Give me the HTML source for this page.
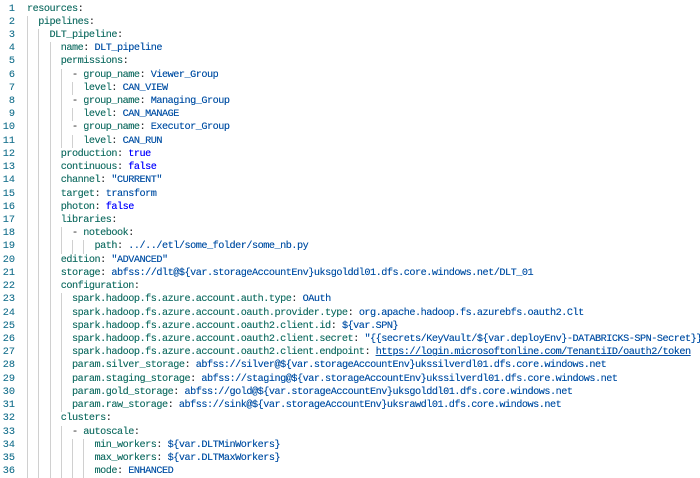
<!DOCTYPE html>
<html><head><meta charset="utf-8"><style>
html,body{margin:0;padding:0;background:#fff;width:700px;height:478px;overflow:hidden}
#c{position:absolute;left:0;top:2.5px;font-family:"Liberation Mono",monospace;font-size:10.2px;letter-spacing:-0.49px;line-height:13.23px;text-shadow:0 0 0.3px currentColor}
.l{height:13.23px;white-space:pre;position:relative}
.n{position:absolute;left:0;width:15px;text-align:right;color:#237893;letter-spacing:0}
.t{position:absolute;left:27px;top:0}
.g{display:inline-block;width:11.26px;height:13.23px;vertical-align:top;box-shadow:inset 1px 0 0 #d0d0d0}
.k{color:#177066}.v{color:#0451a5}.b{color:#0000ff}.p{color:#333}.u{text-decoration:underline}
</style></head><body><div id="c">
<div class="l"><span class="n">1</span><span class="t"><span class="k">resources</span><span class="p">:</span></span></div>
<div class="l"><span class="n">2</span><span class="t"><span class="g"></span><span class="k">pipelines</span><span class="p">:</span></span></div>
<div class="l"><span class="n">3</span><span class="t"><span class="g"></span><span class="g"></span><span class="k">DLT_pipeline</span><span class="p">:</span></span></div>
<div class="l"><span class="n">4</span><span class="t"><span class="g"></span><span class="g"></span><span class="g"></span><span class="k">name</span><span class="p">: </span><span class="v">DLT_pipeline</span></span></div>
<div class="l"><span class="n">5</span><span class="t"><span class="g"></span><span class="g"></span><span class="g"></span><span class="k">permissions</span><span class="p">:</span></span></div>
<div class="l"><span class="n">6</span><span class="t"><span class="g"></span><span class="g"></span><span class="g"></span><span class="g"></span><span class="p">- </span><span class="k">group_name</span><span class="p">: </span><span class="v">Viewer_Group</span></span></div>
<div class="l"><span class="n">7</span><span class="t"><span class="g"></span><span class="g"></span><span class="g"></span><span class="g"></span><span class="g"></span><span class="k">level</span><span class="p">: </span><span class="v">CAN_VIEW</span></span></div>
<div class="l"><span class="n">8</span><span class="t"><span class="g"></span><span class="g"></span><span class="g"></span><span class="g"></span><span class="p">- </span><span class="k">group_name</span><span class="p">: </span><span class="v">Managing_Group</span></span></div>
<div class="l"><span class="n">9</span><span class="t"><span class="g"></span><span class="g"></span><span class="g"></span><span class="g"></span><span class="g"></span><span class="k">level</span><span class="p">: </span><span class="v">CAN_MANAGE</span></span></div>
<div class="l"><span class="n">10</span><span class="t"><span class="g"></span><span class="g"></span><span class="g"></span><span class="g"></span><span class="p">- </span><span class="k">group_name</span><span class="p">: </span><span class="v">Executor_Group</span></span></div>
<div class="l"><span class="n">11</span><span class="t"><span class="g"></span><span class="g"></span><span class="g"></span><span class="g"></span><span class="g"></span><span class="k">level</span><span class="p">: </span><span class="v">CAN_RUN</span></span></div>
<div class="l"><span class="n">12</span><span class="t"><span class="g"></span><span class="g"></span><span class="g"></span><span class="k">production</span><span class="p">: </span><span class="b">true</span></span></div>
<div class="l"><span class="n">13</span><span class="t"><span class="g"></span><span class="g"></span><span class="g"></span><span class="k">continuous</span><span class="p">: </span><span class="b">false</span></span></div>
<div class="l"><span class="n">14</span><span class="t"><span class="g"></span><span class="g"></span><span class="g"></span><span class="k">channel</span><span class="p">: </span><span class="v">"CURRENT"</span></span></div>
<div class="l"><span class="n">15</span><span class="t"><span class="g"></span><span class="g"></span><span class="g"></span><span class="k">target</span><span class="p">: </span><span class="v">transform</span></span></div>
<div class="l"><span class="n">16</span><span class="t"><span class="g"></span><span class="g"></span><span class="g"></span><span class="k">photon</span><span class="p">: </span><span class="b">false</span></span></div>
<div class="l"><span class="n">17</span><span class="t"><span class="g"></span><span class="g"></span><span class="g"></span><span class="k">libraries</span><span class="p">:</span></span></div>
<div class="l"><span class="n">18</span><span class="t"><span class="g"></span><span class="g"></span><span class="g"></span><span class="g"></span><span class="p">- </span><span class="k">notebook</span><span class="p">:</span></span></div>
<div class="l"><span class="n">19</span><span class="t"><span class="g"></span><span class="g"></span><span class="g"></span><span class="g"></span><span class="g"></span><span class="g"></span><span class="k">path</span><span class="p">: </span><span class="v">../../etl/some_folder/some_nb.py</span></span></div>
<div class="l"><span class="n">20</span><span class="t"><span class="g"></span><span class="g"></span><span class="g"></span><span class="k">edition</span><span class="p">: </span><span class="v">"ADVANCED"</span></span></div>
<div class="l"><span class="n">21</span><span class="t"><span class="g"></span><span class="g"></span><span class="g"></span><span class="k">storage</span><span class="p">: </span><span class="v">abfss://dlt@${var.storageAccountEnv}uksgolddl01.dfs.core.windows.net/DLT_01</span></span></div>
<div class="l"><span class="n">22</span><span class="t"><span class="g"></span><span class="g"></span><span class="g"></span><span class="k">configuration</span><span class="p">:</span></span></div>
<div class="l"><span class="n">23</span><span class="t"><span class="g"></span><span class="g"></span><span class="g"></span><span class="g"></span><span class="k">spark.hadoop.fs.azure.account.auth.type</span><span class="p">: </span><span class="v">OAuth</span></span></div>
<div class="l"><span class="n">24</span><span class="t"><span class="g"></span><span class="g"></span><span class="g"></span><span class="g"></span><span class="k">spark.hadoop.fs.azure.account.oauth.provider.type</span><span class="p">: </span><span class="v">org.apache.hadoop.fs.azurebfs.oauth2.Clt</span></span></div>
<div class="l"><span class="n">25</span><span class="t"><span class="g"></span><span class="g"></span><span class="g"></span><span class="g"></span><span class="k">spark.hadoop.fs.azure.account.oauth2.client.id</span><span class="p">: </span><span class="v">${var.SPN}</span></span></div>
<div class="l"><span class="n">26</span><span class="t"><span class="g"></span><span class="g"></span><span class="g"></span><span class="g"></span><span class="k">spark.hadoop.fs.azure.account.oauth2.client.secret</span><span class="p">: </span><span class="v">"{{secrets/KeyVault/${var.deployEnv}-DATABRICKS-SPN-Secret}}"</span></span></div>
<div class="l"><span class="n">27</span><span class="t"><span class="g"></span><span class="g"></span><span class="g"></span><span class="g"></span><span class="k">spark.hadoop.fs.azure.account.oauth2.client.endpoint</span><span class="p">: </span><span class="v u">https://login.microsoftonline.com/TenantiID/oauth2/token</span></span></div>
<div class="l"><span class="n">28</span><span class="t"><span class="g"></span><span class="g"></span><span class="g"></span><span class="g"></span><span class="k">param.silver_storage</span><span class="p">: </span><span class="v">abfss://silver@${var.storageAccountEnv}ukssilverdl01.dfs.core.windows.net</span></span></div>
<div class="l"><span class="n">29</span><span class="t"><span class="g"></span><span class="g"></span><span class="g"></span><span class="g"></span><span class="k">param.staging_storage</span><span class="p">: </span><span class="v">abfss://staging@${var.storageAccountEnv}ukssilverdl01.dfs.core.windows.net</span></span></div>
<div class="l"><span class="n">30</span><span class="t"><span class="g"></span><span class="g"></span><span class="g"></span><span class="g"></span><span class="k">param.gold_storage</span><span class="p">: </span><span class="v">abfss://gold@${var.storageAccountEnv}uksgolddl01.dfs.core.windows.net</span></span></div>
<div class="l"><span class="n">31</span><span class="t"><span class="g"></span><span class="g"></span><span class="g"></span><span class="g"></span><span class="k">param.raw_storage</span><span class="p">: </span><span class="v">abfss://sink@${var.storageAccountEnv}uksrawdl01.dfs.core.windows.net</span></span></div>
<div class="l"><span class="n">32</span><span class="t"><span class="g"></span><span class="g"></span><span class="g"></span><span class="k">clusters</span><span class="p">:</span></span></div>
<div class="l"><span class="n">33</span><span class="t"><span class="g"></span><span class="g"></span><span class="g"></span><span class="g"></span><span class="p">- </span><span class="k">autoscale</span><span class="p">:</span></span></div>
<div class="l"><span class="n">34</span><span class="t"><span class="g"></span><span class="g"></span><span class="g"></span><span class="g"></span><span class="g"></span><span class="g"></span><span class="k">min_workers</span><span class="p">: </span><span class="v">${var.DLTMinWorkers}</span></span></div>
<div class="l"><span class="n">35</span><span class="t"><span class="g"></span><span class="g"></span><span class="g"></span><span class="g"></span><span class="g"></span><span class="g"></span><span class="k">max_workers</span><span class="p">: </span><span class="v">${var.DLTMaxWorkers}</span></span></div>
<div class="l"><span class="n">36</span><span class="t"><span class="g"></span><span class="g"></span><span class="g"></span><span class="g"></span><span class="g"></span><span class="g"></span><span class="k">mode</span><span class="p">: </span><span class="v">ENHANCED</span></span></div>
</div></body></html>
